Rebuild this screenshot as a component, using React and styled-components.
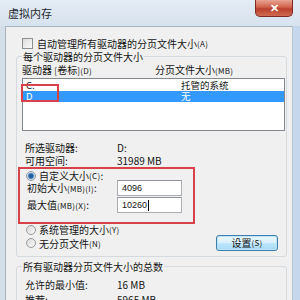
import React from 'react';
import styled, { createGlobalStyle } from 'styled-components';

const Global = createGlobalStyle`
  html, body { margin: 0; padding: 0; background: #fff; }
  body { font-family: "Noto Sans CJK SC", "Liberation Sans", sans-serif; }
`;

const Window = styled.div`
  width: 300px;
  height: 300px;
  overflow: hidden;
  background: linear-gradient(90deg, #d4dfea 0%, #dce6f0 60%, #c4d7ec 100%);
  display: flex;
  flex-direction: column;
  font-size: 10px;
  color: #141414;
`;

const TitleBar = styled.div`
  height: 26px;
  flex-shrink: 0;
  display: flex;
  align-items: flex-start;
  justify-content: space-between;
  padding: 0 7px 0 8px;
  background: linear-gradient(180deg, #e4ecf4 0%, #d6e2ee 100%);
`;

const Title = styled.div`
  font-size: 11px;
  line-height: 13px;
  margin-top: 7px;
  color: #1e2630;
`;

const CloseButton = styled.div`
  width: 38px;
  height: 17px;
  box-sizing: border-box;
  border: 1px solid #7d2a26;
  border-top: none;
  border-radius: 0 0 5px 5px;
  background: linear-gradient(180deg, #e9a493 0%, #d0604c 45%, #b9402e 55%, #cf6a50 100%);
  display: flex;
  align-items: center;
  justify-content: center;
  color: #fff;
  font-family: "Liberation Sans", sans-serif;
  font-weight: bold;
  font-size: 11px;
  line-height: 11px;
`;

const Frame = styled.div`
  flex: 1;
  padding: 0 7px 0 5px;
  display: flex;
`;

const Body = styled.div`
  flex: 1;
  background: #f0f0f0;
  border-left: 1px solid #a7b3bf;
  border-top: 1px solid #a7b3bf;
  border-right: 1px solid #b8c4d0;
  padding: 10px 5px 0 10px;
  display: flex;
  flex-direction: column;
`;

const Row = styled.div`
  display: flex;
  align-items: center;
  height: ${p => p.h || 13}px;
  margin-top: ${p => p.mt || 0}px;
  padding-left: ${p => p.pl || 0}px;
  line-height: 13px;
  white-space: nowrap;
`;

const Checkbox = styled.span`
  width: 9px;
  height: 9px;
  border: 1px solid #8e8f8f;
  background: linear-gradient(135deg, #dcdcdc, #fbfbfb);
  margin-left: 6px;
  margin-right: 4px;
  flex-shrink: 0;
`;

const Radio = styled.span`
  width: 8px;
  height: 8px;
  border-radius: 50%;
  border: 1px solid #9a9a9a;
  background: ${p => p.checked
    ? 'radial-gradient(circle, #2a5f9a 0 2px, #7fb0e0 3px, #eef3f8 4px)'
    : 'linear-gradient(135deg, #d8d8d8, #fafafa)'};
  margin-right: 3px;
  flex-shrink: 0;
`;

const Small = styled.span`
  font-size: 8px;
  letter-spacing: 0.3px;
`;

const Group = styled.div`
  position: relative;
  border: 1px solid #d5dadf;
  border-radius: 3px;
  margin-top: ${p => p.mt || 0}px;
  padding: ${p => p.pt || 6}px 1px 0 5px;
  height: ${p => p.h}px;
  box-sizing: border-box;
  display: flex;
  flex-direction: column;
`;

const Legend = styled.div`
  position: absolute;
  top: -7px;
  left: 5px;
  padding: 0 1px;
  background: #f0f0f0;
  line-height: 13px;
  white-space: nowrap;
`;

const ColA = styled.div`
  width: ${p => p.w}px;
  flex-shrink: 0;
`;

const ListBox = styled.div`
  margin-top: 2px;
  height: 53px;
  box-sizing: border-box;
  border: 1px solid #828790;
  background: #fff;
  padding-top: 1px;
`;

const ListRow = styled.div`
  display: flex;
  align-items: center;
  height: 11px;
  line-height: 11px;
  font-size: 9.5px;
  padding-left: 3px;
  background: ${p => (p.selected ? '#3399ff' : 'transparent')};
  color: ${p => (p.selected ? '#fff' : '#141414')};
`;

const Highlight = styled.div`
  position: absolute;
  left: ${p => p.x}px;
  top: ${p => p.y}px;
  width: ${p => p.w}px;
  height: ${p => p.h}px;
  box-sizing: border-box;
  border: 2px solid #d9414a;
  pointer-events: none;
`;

const Input = styled.div`
  width: 65px;
  height: 16px;
  box-sizing: border-box;
  border: 1px solid #abadb3;
  border-top-color: #8f939b;
  background: #fff;
  padding-left: 4px;
  line-height: 14px;
  font-family: "Liberation Sans", sans-serif;
  font-size: 9px;
`;

const Caret = styled.span`
  display: inline-block;
  width: 1px;
  height: 11px;
  background: #000;
  vertical-align: middle;
  margin-left: 1px;
`;

const Button = styled.div`
  margin-left: auto;
  margin-right: 7px;
  width: 62px;
  height: 16px;
  box-sizing: border-box;
  border: 1px solid #3c7fb1;
  border-radius: 3px;
  box-shadow: inset 0 0 0 1px #bfe4f7;
  background: linear-gradient(180deg, #eaf6fd 0%, #d9f0fc 50%, #bee6fd 51%, #a7d9f5 100%);
  display: flex;
  align-items: center;
  justify-content: center;
  line-height: 12px;
`;

export default function App() {
  return (
    <>
      <Global />
      <Window>
        <TitleBar>
          <Title>虚拟内存</Title>
          <CloseButton>✕</CloseButton>
        </TitleBar>
        <Frame>
          <Body>
            <Row>
              <Checkbox />
              自动管理所有驱动器的分页文件大小<Small>(A)</Small>
            </Row>
            <Group mt={6} h={201}>
              <Legend>每个驱动器的分页文件大小</Legend>
              <Row>
                <ColA w={133}>驱动器 <Small>[</Small>卷标<Small>](D)</Small></ColA>
                <span>分页文件大小<Small>(MB)</Small></span>
              </Row>
              <ListBox>
                <ListRow>
                  <ColA w={155}>C:</ColA>托管的系统
                </ListRow>
                <ListRow selected>
                  <ColA w={155}>D</ColA>无
                </ListRow>
              </ListBox>
              <Highlight x={4} y={27} w={38} h={18} />
              <Row mt={10} pl={3}>
                <ColA w={92}>所选驱动器:</ColA>D:
              </Row>
              <Row pl={3}>
                <ColA w={92}>可用空间:</ColA>31989 MB
              </Row>
              <Highlight x={1} y={110} w={177} h={57} />
              <Row mt={3} h={11} pl={4}>
                <Radio checked />自定义大小<Small>(C)</Small>:
              </Row>
              <Row h={16} mt={-1} pl={5}>
                <ColA w={90}>初始大小<Small>(MB)(I)</Small>:</ColA>
                <Input>4096</Input>
              </Row>
              <Row h={16} mt={1} pl={5}>
                <ColA w={90}>最大值<Small>(MB)(X)</Small>:</ColA>
                <Input>10260<Caret /></Input>
              </Row>
              <Row h={11} mt={11} pl={4}>
                <Radio />系统管理的大小<Small>(Y)</Small>
              </Row>
              <Row h={16} mt={0} pl={4}>
                <Radio />无分页文件<Small>(N)</Small>
                <Button>设置<Small>(S)</Small></Button>
              </Row>
            </Group>
            <Group mt={9} h={60} pt={11}>
              <Legend>所有驱动器分页文件大小的总数</Legend>
              <Row pl={3}>
                <ColA w={92}>允许的最小值:</ColA>16 MB
              </Row>
              <Row mt={2} pl={3}>
                <ColA w={92}>推荐:</ColA>5965 MB
              </Row>
            </Group>
          </Body>
        </Frame>
      </Window>
    </>
  );
}
